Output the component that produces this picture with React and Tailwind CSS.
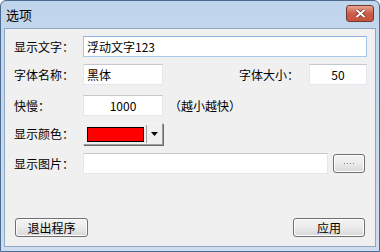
import React from "react";

const font = { fontFamily: '"Noto Sans CJK SC", "Liberation Sans", sans-serif' };

const Box = ({ className = "", children, focused }) => (
  <div
    className={`flex h-[21px] items-center border bg-white px-[3px] text-[12px] text-black ${
      focused ? "border-[#a8c8ea] border-t-[#8fb3dc]" : "border-[#e2e8ee] border-t-[#c4c9cf]"
    } ${className}`}
  >
    {children}
  </div>
);

const Btn = ({ className = "", children }) => (
  <div
    className={`flex items-center justify-center rounded-[3px] border border-[#707070] bg-gradient-to-b from-[#f4f4f4] via-[#ebebeb] to-[#d8d8d8] text-[12px] text-black shadow-[inset_0_0_0_1px_#fcfcfc] ${className}`}
  >
    {children}
  </div>
);

const Label = ({ className = "", children }) => (
  <span className={`text-[12px] leading-none text-black ${className}`}>{children}</span>
);

export default function App() {
  return (
    <div style={font} className="h-[252px] w-[380px] overflow-hidden bg-white">
      <div className="flex h-full w-full flex-col rounded-t-[6px] border border-[#4c6b8e] bg-gradient-to-b from-[#c0d5ec] to-[#cddcee]">
        {/* title bar */}
        <div className="flex h-[27px] shrink-0 items-center justify-between pl-[5px] pr-[5px]">
          <span className="text-[13px] text-black">选项</span>
          <div className="mb-[3px] flex h-[17px] w-[28px] items-center justify-center rounded-[3px] border border-[#6d3b34] bg-gradient-to-b from-[#e5a593] via-[#cb5c47] to-[#c8523c]">
            <svg width="11" height="9" viewBox="0 0 11 9">
              <path d="M1.5 1 L9.5 8 M9.5 1 L1.5 8" stroke="#5a2a22" strokeWidth="3.2" />
              <path d="M1.5 1 L9.5 8 M9.5 1 L1.5 8" stroke="#ffffff" strokeWidth="2" />
            </svg>
          </div>
        </div>
        {/* client area */}
        <div className="mx-[3px] mb-[4px] flex flex-1 flex-col border border-[#8da6c2] bg-[#f0f0f0] pl-[9px] pr-[8px] pt-[7px]">
          <div className="flex items-center">
            <Label className="w-[69px]">显示文字：</Label>
            <Box focused className="flex-1">浮动文字123</Box>
          </div>
          <div className="mt-[7px] flex items-center">
            <Label className="w-[69px]">字体名称：</Label>
            <Box className="w-[80px]">黑体</Box>
            <Label className="ml-[76px] w-[70px]">字体大小：</Label>
            <Box className="flex-1 justify-center">50</Box>
          </div>
          <div className="mt-[10px] flex items-center">
            <Label className="w-[69px]">快慢：</Label>
            <Box className="w-[80px] justify-center">1000</Box>
            <Label className="ml-[6px]">（越小越快）</Label>
          </div>
          <div className="mt-[7px] flex items-center">
            <Label className="w-[69px]">显示颜色：</Label>
            <div className="flex h-[22px] w-[80px] items-center border border-[#a0a0a0] border-t-[#f4f4f4] border-l-[#f4f4f4] bg-[#f0f0f0] pl-[3px] shadow-[1px_1px_0_#696969]">
              <div className="h-[15px] w-[57px] border border-black bg-[#ff0000]" />
              <div className="ml-[2px] flex h-[18px] w-[16px] items-center justify-center border-l border-[#a0a0a0]">
                <svg width="7" height="4" viewBox="0 0 7 4">
                  <path d="M0 0 H7 L3.5 4 Z" fill="#000" />
                </svg>
              </div>
            </div>
          </div>
          <div className="mt-[8px] flex items-center">
            <Label className="w-[69px]">显示图片：</Label>
            <Box className="w-[245px]" />
            <Btn className="ml-[5px] h-[19px] w-[32px] gap-[2px]">
              <span className="h-[1px] w-[1px] bg-[#808080]" />
              <span className="h-[1px] w-[1px] bg-[#808080]" />
              <span className="h-[1px] w-[1px] bg-[#808080]" />
              <span className="h-[1px] w-[1px] bg-[#808080]" />
            </Btn>
          </div>
          <div className="mt-auto mb-[9px] flex justify-between pl-[1px] pr-[2px]">
            <Btn className="h-[19px] w-[73px]">退出程序</Btn>
            <Btn className="h-[19px] w-[72px]">应用</Btn>
          </div>
        </div>
      </div>
    </div>
  );
}
